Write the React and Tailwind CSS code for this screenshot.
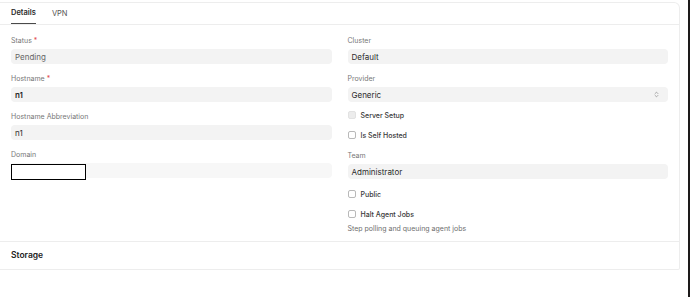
import { ChevronsUpDown } from "lucide-react";

const font = { fontFamily: "Inter, 'Liberation Sans', sans-serif" };

function Label({ text, required }) {
  return (
    <div className="h-[10px] mb-[3px] text-[7px] leading-[10px] text-[#777]">
      {text}
      {required && <span className="text-[#e24c4c]"> *</span>}
    </div>
  );
}

function Field({ label, required, value, strong, muted, select }) {
  return (
    <div>
      <Label text={label} required={required} />
      <div className="h-[15px] rounded-[4px] bg-[#f3f3f3] flex items-center px-[4px]">
        <span
          className={`text-[8px] leading-none ${
            strong ? "font-semibold text-[#1f1f1f]" : muted ? "text-[#666]" : "text-[#2b2b2b]"
          }`}
        >
          {value}
        </span>
        {select && (
          <ChevronsUpDown size={7} strokeWidth={1.6} className="ml-auto mr-[4px] text-[#555]" />
        )}
      </div>
    </div>
  );
}

function Check({ label, disabled, className = "" }) {
  return (
    <div className={`h-[10px] flex items-center gap-[5px] ${className}`}>
      <span
        className={`w-[8px] h-[8px] rounded-[2px] border ${
          disabled ? "bg-[#ececec] border-[#e2e2e2]" : "bg-white border-[#b9b9b9]"
        }`}
      />
      <span className="text-[7px] leading-none text-[#383838] font-medium">{label}</span>
    </div>
  );
}

export default function App() {
  return (
    <div className="w-[690px] h-[302px] bg-white flex antialiased" style={font}>
      <div className="w-[688px] pt-[2px]">
        <div className="w-[680px] border-t border-r border-b border-[#ededed] rounded-tr-[6px] rounded-br-[2px]">
          {/* tabs */}
          <div className="h-[22px] border-b border-[#ededed] flex items-end gap-[16px] px-[11px]">
            <div className="h-full flex items-center border-b border-[#4a4a4a] text-[7.5px] font-semibold text-[#2a2a2a]">
              Details
            </div>
            <div className="h-full flex items-center text-[7.5px] text-[#555]">VPN</div>
          </div>

          {/* details */}
          <div className="grid grid-cols-2 gap-x-[16px] px-[11px] pt-[11px] pb-[7px] border-b border-[#ededed]">
            <div className="flex flex-col gap-[10px]">
              <Field label="Status" required value="Pending" muted />
              <Field label="Hostname" required value="n1" strong />
              <Field label="Hostname Abbreviation" value="n1" />
              <div>
                <Label text="Domain" />
                <div className="h-[15px] rounded-[4px] bg-[#f7f7f7] flex items-center">
                  <div className="w-[75px] h-[16px] mt-[2px] border-[1.5px] border-black bg-white" />
                </div>
              </div>
            </div>
            <div className="flex flex-col gap-[10px]">
              <Field label="Cluster" value="Default" />
              <Field label="Provider" value="Generic" select />
              <Check label="Server Setup" disabled className="-mt-[2px]" />
              <Check label="Is Self Hosted" />
              <div className="mt-[1px]">
                <Field label="Team" value="Administrator" />
              </div>
              <Check label="Public" />
              <div>
                <Check label="Halt Agent Jobs" />
                <div className="mt-[5px] text-[7px] leading-[10px] text-[#6e6e6e]">
                  Step polling and queuing agent jobs
                </div>
              </div>
            </div>
          </div>

          {/* storage */}
          <div className="px-[11px] pt-[7px] pb-[8px]">
            <div className="text-[8.5px] leading-[12px] font-semibold text-[#222]">Storage</div>
          </div>
        </div>
      </div>
      <div className="w-[2px] h-[297px] bg-[#1d1a1a]" />
    </div>
  );
}
